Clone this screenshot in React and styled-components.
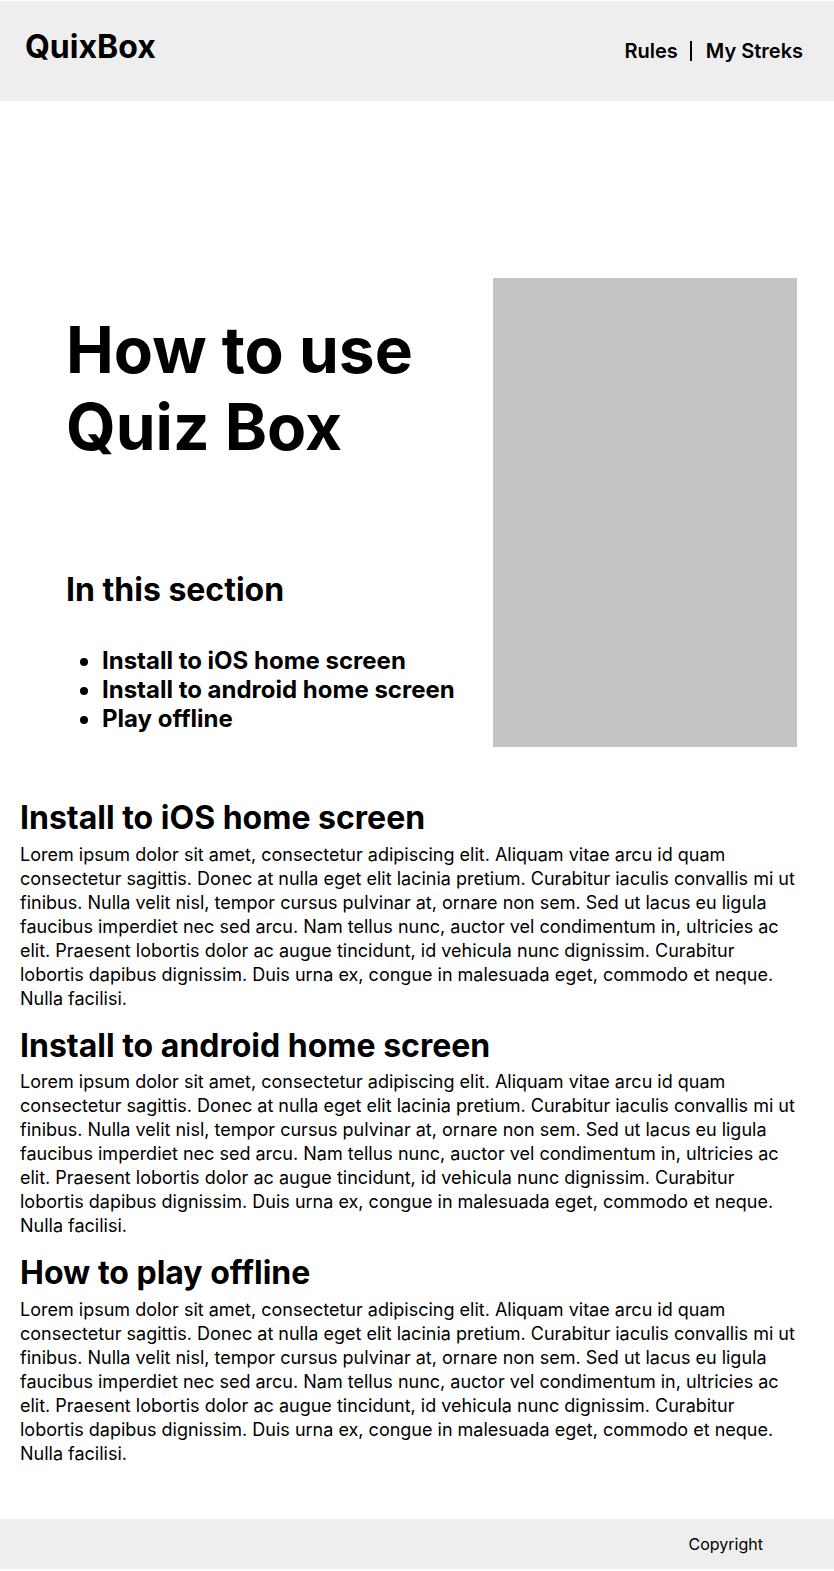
import React from "react";
import styled, { createGlobalStyle } from "styled-components";

const GlobalStyle = createGlobalStyle`
  body {
    margin: 0;
    font-family: Inter, "Noto Sans", sans-serif;
    color: #000;
    background: #fff;
  }
`;

const Page = styled.div`
  display: flex;
  flex-direction: column;
  padding: 1px 0 2px;
`;

const Header = styled.header`
  display: flex;
  justify-content: space-between;
  align-items: center;
  height: 100px;
  padding: 0 31px 0 25px;
  background: #eeeeee;
`;

const Logo = styled.div`
  font-size: 32px;
  font-weight: 700;
  margin-bottom: 9px;
`;

const Nav = styled.nav`
  display: flex;
  align-items: center;
  font-size: 20px;
  font-weight: 600;
`;

const NavLink = styled.a`
  color: #000;
  text-decoration: none;
`;

const Divider = styled.span`
  width: 2px;
  height: 20px;
  background: #000;
  margin: 0 14px 0 12px;
`;

const Hero = styled.section`
  display: grid;
  grid-template-columns: 1fr 304px;
  column-gap: 20px;
  padding: 0 37px 0 66px;
`;

const Intro = styled.div`
  display: flex;
  flex-direction: column;
  padding-top: 210px;
`;

const Title = styled.h1`
  margin: 0;
  font-size: 64px;
  font-weight: 700;
  line-height: 1.21;
`;

const SubTitle = styled.h2`
  margin: 105px 0 0;
  font-size: 32px;
  font-weight: 700;
  line-height: 1.21;
`;

const Contents = styled.ul`
  margin: 36px 0 0;
  padding-left: 36px;
  font-size: 24px;
  font-weight: 700;
  line-height: 1.21;
`;

const Picture = styled.div`
  margin-top: 177px;
  height: 469px;
  background: #c4c4c4;
`;

const Main = styled.main`
  display: flex;
  flex-direction: column;
  gap: 16px;
  padding: 52px 36px 53px 20px;
`;

const Article = styled.article`
  display: flex;
  flex-direction: column;
  gap: 5px;
`;

const Heading = styled.h2`
  margin: 0;
  font-size: 32px;
  font-weight: 700;
  line-height: 1.21;
`;

const Text = styled.p`
  margin: 0;
  font-size: 18px;
  line-height: 24px;
`;

const Footer = styled.footer`
  display: flex;
  justify-content: flex-end;
  align-items: center;
  height: 50px;
  padding-right: 71px;
  background: #eeeeee;
  font-size: 16px;
`;

const lorem =
  "Lorem ipsum dolor sit amet, consectetur adipiscing elit. Aliquam vitae arcu id quam consectetur sagittis. Donec at nulla eget elit lacinia pretium. Curabitur iaculis convallis mi ut finibus. Nulla velit nisl, tempor cursus pulvinar at, ornare non sem. Sed ut lacus eu ligula faucibus imperdiet nec sed arcu. Nam tellus nunc, auctor vel condimentum in, ultricies ac elit. Praesent lobortis dolor ac augue tincidunt, id vehicula nunc dignissim. Curabitur lobortis dapibus dignissim. Duis urna ex, congue in malesuada eget, commodo et neque. Nulla facilisi.";

const sections = [
  "Install to iOS home screen",
  "Install to android home screen",
  "How to play offline",
];

const App = () => {
  return (
    <Page>
      <GlobalStyle />
      <Header>
        <Logo>QuixBox</Logo>
        <Nav>
          <NavLink href="#">Rules</NavLink>
          <Divider />
          <NavLink href="#">My Streks</NavLink>
        </Nav>
      </Header>
      <Hero>
        <Intro>
          <Title>
            How to use
            <br />
            Quiz Box
          </Title>
          <SubTitle>In this section</SubTitle>
          <Contents>
            <li>Install to iOS home screen</li>
            <li>Install to android home screen</li>
            <li>Play offline</li>
          </Contents>
        </Intro>
        <Picture />
      </Hero>
      <Main>
        {sections.map((title) => (
          <Article key={title}>
            <Heading>{title}</Heading>
            <Text>{lorem}</Text>
          </Article>
        ))}
      </Main>
      <Footer>Copyright</Footer>
    </Page>
  );
};

export default App;
